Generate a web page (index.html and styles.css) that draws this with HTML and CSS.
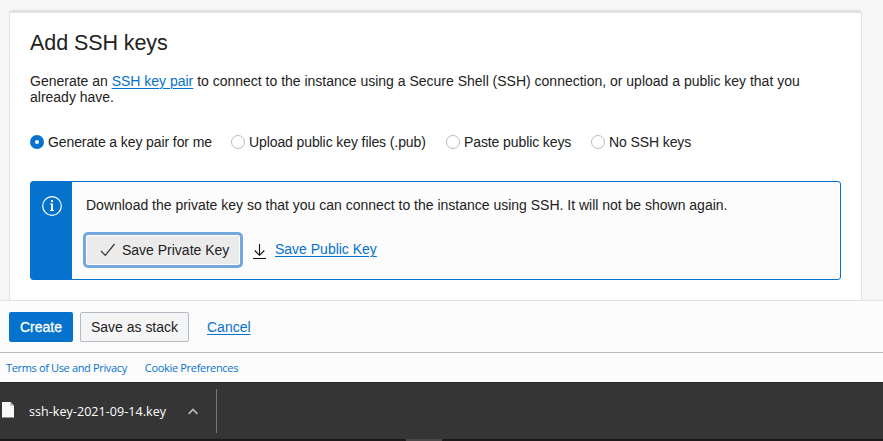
FILE: index.html
```html
<!DOCTYPE html>
<html lang="en">
<head>
<meta charset="utf-8">
<title>Add SSH keys</title>
<link rel="stylesheet" href="styles.css">
</head>
<body>
<main class="content">
  <section class="card">
    <h2 class="title">Add SSH keys</h2>
    <p class="intro">Generate an <a href="#">SSH key pair</a> to connect to the instance using a Secure Shell (SSH) connection, or upload a public key that you<br>already have.</p>
    <div class="options">
      <label class="option generate"><span class="radio checked"></span><span>Generate a key pair for me</span></label>
      <label class="option upload"><span class="radio"></span><span>Upload public key files (.pub)</span></label>
      <label class="option paste"><span class="radio"></span><span>Paste public keys</span></label>
      <label class="option"><span class="radio"></span><span>No SSH keys</span></label>
    </div>
    <div class="notice">
      <div class="notice-side">
        <svg width="20" height="20" viewBox="0 0 20 20" fill="none" stroke="#fff"><circle cx="10" cy="10" r="9.3" stroke-width="1.2"/><path d="M10 4v2M10 7.5v7.5" stroke-width="2"/><path d="M8 8h2M8 14.5h4" stroke-width="1"/></svg>
      </div>
      <div class="notice-body">
        <p class="notice-text">Download the private key so that you can connect to the instance using SSH. It will not be shown again.</p>
        <div class="actions">
          <button class="private"><svg width="16" height="14" viewBox="0 0 16 14" fill="none" stroke="#333" stroke-width="1.2"><path d="M1 8l4.3 4.3L14.5 1"/></svg><span>Save Private Key</span></button>
          <svg class="download" width="13" height="16" viewBox="0 0 13 16" fill="none" stroke="#111" stroke-width="1.1"><path d="M6.5 1v11M1.7 7.5l4.8 4.8 4.8-4.8M0 15.5h13"/></svg>
          <a class="public" href="#">Save Public Key</a>
        </div>
      </div>
    </div>
  </section>
</main>
<div class="bar">
  <button class="btn create">Create</button>
  <button class="btn stack">Save as stack</button>
  <a class="cancel" href="#">Cancel</a>
</div>
<footer class="legal"><a class="terms" href="#">Terms of Use and Privacy</a><a class="cookies" href="#">Cookie Preferences</a></footer>
<div class="shelf">
  <svg class="file" width="13" height="16" viewBox="0 0 13 16"><path d="M0 0h8.5L12 3.5V15.5H0z" fill="#f8f8f8"/><path d="M8.5 0L12 3.5H8.5z" fill="#aaa"/></svg>
  <span class="filename">ssh-key-2021-09-14.key</span>
  <svg class="chevron" width="10" height="7" viewBox="0 0 10 7" fill="none" stroke="#bbb" stroke-width="1.7"><path d="M.6 5.8L5 1.4l4.4 4.4"/></svg>
</div>
<div class="edge"><span></span></div>
</body>
</html>
```
FILE: styles.css
```css
* { box-sizing: border-box; }
body {
  margin: 0; height: 441px; overflow: hidden;
  display: flex; flex-direction: column;
  background: #f6f6f6; color: #222;
  font: 14px/16px "Liberation Sans", Arial, sans-serif;
  letter-spacing: -0.006px; white-space: nowrap;
}
a { color: #0572ce; text-decoration: underline; text-underline-offset: 1.5px; text-decoration-thickness: 1px; }
h2, p { margin: 0; }
button { font: inherit; letter-spacing: inherit; color: inherit; padding: 0; }
svg { display: block; flex: none; }
.content { height: 300px; padding: 10px 21px 0 9px; }
.card {
  height: 290px; padding: 17px 20px 0; background: #fff;
  border: 1px solid #e2e2e6; border-top-width: 3px; border-bottom: 0;
  border-radius: 3px 3px 0 0;
}
.title { font-size: 21.5px; line-height: 26px; font-weight: 400; letter-spacing: -0.08px; }
.intro { margin-top: 17px; }
.options { display: flex; margin-top: 29px; letter-spacing: -0.1px; }
.option { display: flex; flex: none; align-items: center; gap: 5px; }
.generate { width: 201px; }
.upload { width: 215px; }
.paste { width: 145px; }
.radio { width: 14px; height: 14px; border: 1px solid #b6bbc2; border-radius: 50%; background: #fff; margin-right: -1px; }
.radio.checked { border: 5px solid #0572ce; }
.notice { display: flex; width: 811px; height: 99px; margin-top: 31px; background: #fcfcfc; border: 1px solid #0572ce; border-radius: 3px; }
.notice-side { width: 41px; background: #0572ce; padding: 14px 0 0 11px; }
.notice-body { padding: 15px 0 0 14px; }
.actions { display: flex; margin: 19px 0 0 -3px; }
.private { display: flex; align-items: center; gap: 6px; width: 160px; height: 36px; border: 3px solid #74a6e1; border-radius: 5px; background: #ebebeb; padding-left: 14px; box-shadow: inset 0 0 0 1px #fff; }
.download { margin: 11px 9px 0 10px; }
.public { margin-top: 9px; }
.bar { height: 53px; display: flex; background: #fcfcfc; border-top: 1px solid #e4e4e6; border-bottom: 1px solid #b4b9c2; padding: 11px 9px; }
.btn { height: 30px; border-radius: 2px; }
.create { width: 64px; background: #0572ce; color: #fff; border: 0; -webkit-text-stroke: 0.3px #fff; }
.stack { width: 109px; margin-left: 7px; background: #f5f5f5; border: 1px solid #b2bac3; }
.cancel { margin: 7px 0 0 18px; }
.legal { height: 29px; background: #fcfcfc; padding: 7px 6px; font: 11px/16px "Open Sans", sans-serif; letter-spacing: -0.35px; }
.legal a { text-decoration: none; }
.cookies { margin-left: 18px; letter-spacing: -0.32px; }
.shelf { height: 57px; display: flex; align-items: center; background: #353535; border-top: 1px solid #282828; color: #fff; font: 12.5px/16px "Open Sans", sans-serif; letter-spacing: 0.06px; }
.file { margin: -2px 14px 0 2px; }
.filename { width: 159px; margin-top: 1px; }
.chevron { width: 10px; }
.shelf::after { content: ""; width: 1px; height: 44px; margin-left: 18px; background: #777; }
.edge { height: 2px; background: #1d1a1b; }
.edge span { display: block; width: 36px; height: 2px; margin-left: 406px; background: #4b4849; }
```
